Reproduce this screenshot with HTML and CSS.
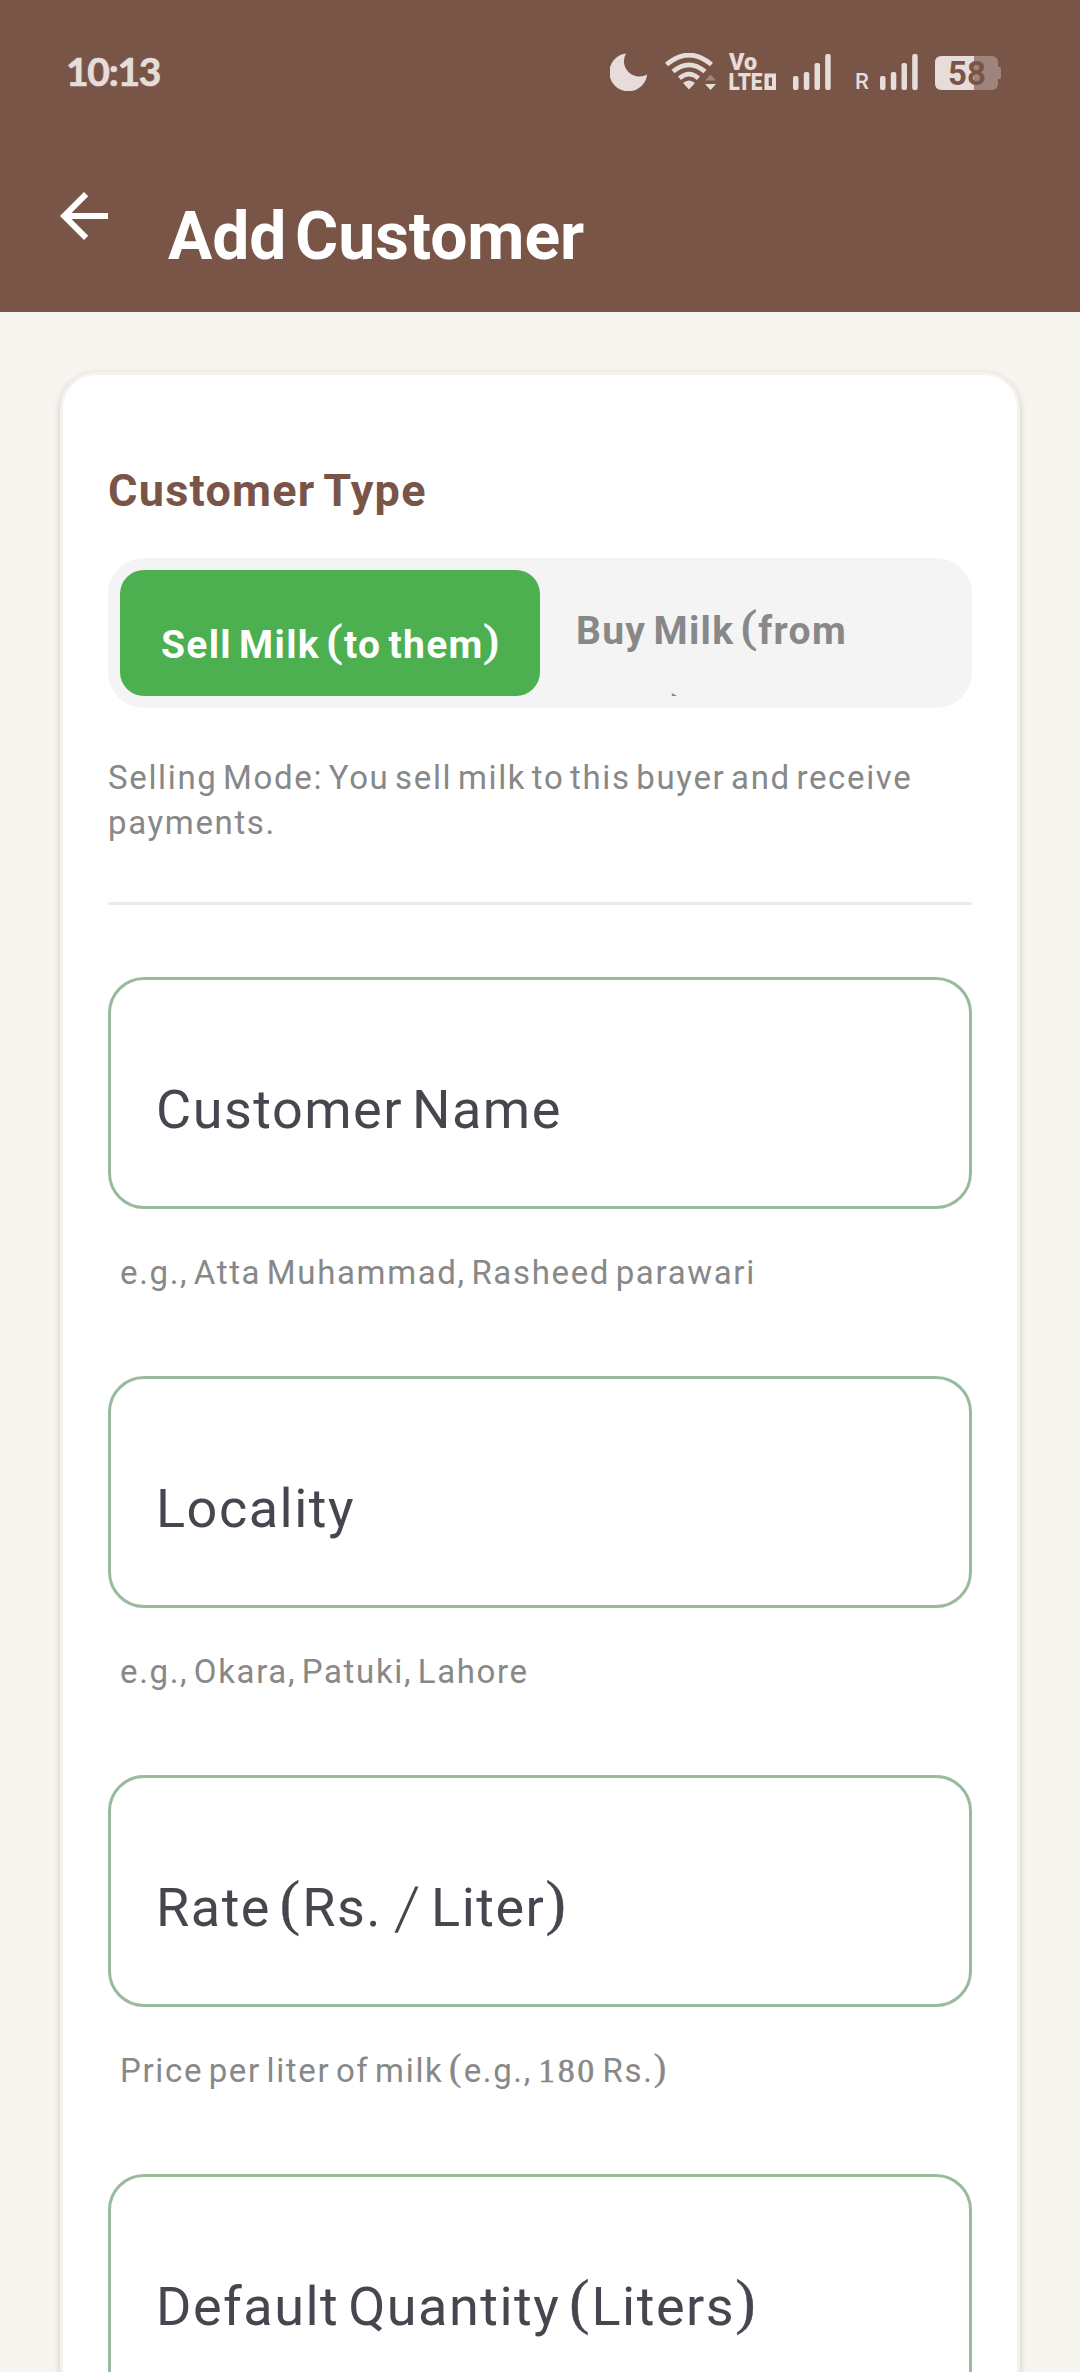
FILE: index.html
```html
<!DOCTYPE html>
<html lang="en">
<head>
<meta charset="utf-8">
<title>Add Customer</title>
<link rel="stylesheet" href="styles.css">
</head>
<body>
<header class="header">
  <div class="status">
    <span class="clock">10:13</span>
    <div class="status-icons">
      <svg class="moon" width="38" height="38" viewBox="0 0 38 38"><path d="M16 .4A19 19 0 1 0 37.200 21.500 15.500 15.500 0 0 1 16 .4Z"/></svg>
      <svg class="wifi" width="52" height="38" viewBox="0 0 52 38">
        <g class="line"><path d="M2.500 11.500Q25 -7.500 47.500 11.500"/><path d="M9 18.600Q25 5 41 18.600"/><path d="M15.500 25.300Q25 17 34.500 25.300"/></g>
        <path d="M19 30Q25 25 31 30L25 36.500Z"/>
        <path class="dim" d="M41 27.500L46.500 21.500 52 27.500Z"/><path d="M41 31H52L46.500 37Z"/>
      </svg>
      <svg class="volte" width="48" height="38" viewBox="0 0 48 38">
        <text x="-1" y="17" textLength="28" lengthAdjust="spacingAndGlyphs">Vo</text><text x="-1.500" y="37" textLength="34" lengthAdjust="spacingAndGlyphs">LTE</text>
        <path fill-rule="evenodd" d="M34.500 20.500H46V37H34.500ZM38.700 24.500V33H42V24.500Z"/>
      </svg>
      <svg class="signal" width="38" height="38" viewBox="0 0 38 38"><rect y="23" width="5.500" height="14" rx="2"/><rect x="10.800" y="19" width="5.500" height="18" rx="2"/><rect x="21.500" y="10" width="5.500" height="27" rx="2"/><rect x="32.200" y="1" width="5.500" height="36" rx="2"/></svg>
      <span class="roaming">R</span>
      <svg class="signal" width="38" height="38" viewBox="0 0 38 38"><rect y="23" width="5.500" height="14" rx="2"/><rect x="10.800" y="19" width="5.500" height="18" rx="2"/><rect x="21.500" y="10" width="5.500" height="27" rx="2"/><rect x="32.200" y="1" width="5.500" height="36" rx="2"/></svg>
      <svg class="battery" width="66" height="38" viewBox="0 0 66 38">
        <path class="dim" d="M39 3H56.500Q63 3 63 9.500V14H64.500Q66 14 66 15.500V24.500Q66 26 64.500 26H63V30.500Q63 37 56.500 37H39Z"/>
        <path d="M6.500 3H39V37H6.500Q0 37 0 30.500V9.500Q0 3 6.500 3Z"/>
        <text class="level" x="13" y="31.500" textLength="38">58</text>
      </svg>
    </div>
  </div>
  <div class="appbar">
    <svg class="back" width="72" height="72" viewBox="0 0 24 24"><path d="M20 11H7.830l5.590-5.590L12 4l-8 8 8 8 1.410-1.410L7.830 13H20v-2z"/></svg>
    <h1 class="title">Add Customer</h1>
  </div>
</header>
<main class="card">
  <h2 class="section">Customer Type</h2>
  <div class="toggle">
    <div class="tab tab-active">Sell Milk <span class="paren">(</span>to them<span class="paren">)</span></div>
    <div class="tab">Buy Milk <span class="paren">(</span>from<br>them<span class="paren">)</span></div>
  </div>
  <p class="mode">Selling Mode: You sell milk to this buyer and receive payments.</p>
  <div class="divider"></div>
  <div class="field">Customer Name</div>
  <p class="hint">e.g., Atta Muhammad, Rasheed parawari</p>
  <div class="field">Locality</div>
  <p class="hint">e.g., Okara, Patuki, Lahore</p>
  <div class="field">Rate <span class="paren">(</span>Rs. <span class="slash">/</span> Liter<span class="paren">)</span></div>
  <p class="hint">Price per liter of milk <span class="paren">(</span>e.g., <span class="num">180</span> Rs.<span class="paren">)</span></p>
  <div class="field">Default Quantity <span class="paren">(</span>Liters<span class="paren">)</span></div>
</main>
</body>
</html>
```
FILE: styles.css
```css
* { box-sizing: border-box; }
body {
  margin: 0;
  width: 1080px;
  height: 2372px;
  overflow: hidden;
  background: #f7f5f0;
  font-family: Roboto, sans-serif;
}
h1, h2, p { margin: 0; }

.header { height: 312px; background: #795548; color: #fff; }
.status {
  height: 144px;
  padding: 0 79px 0 66px;
  display: flex;
  justify-content: space-between;
  color: #e6dcd9;
}
.clock {
  margin-top: 48px;
  font: bold 39px/47px Lato, sans-serif;
  letter-spacing: -1.3px;
  -webkit-text-stroke: .7px currentColor;
}
.status-icons { display: flex; padding-top: 53px; fill: #e6dcd9; }
.wifi { margin-left: 16px; }
.wifi .line { fill: none; stroke: #e6dcd9; stroke-width: 4.6; }
.dim { opacity: .35; }
.volte { margin-left: 14px; overflow: visible; font: 900 23px Roboto, sans-serif; }
.signal { margin-left: 15px; }
.roaming { margin: 16px 0 0 24px; width: 10px; font: 500 22px/26px Roboto, sans-serif; }
.battery { margin-left: 17px; }
.level { fill: #795548; font: bold 33px Roboto, sans-serif; }

.appbar { display: flex; align-items: flex-start; padding-left: 48px; }
.back { margin: 36px 48px 0 0; fill: #fff; }
.title {
  margin-top: 33px;
  font-size: 66px;
  line-height: 120px;
  word-spacing: -7.6px;
  letter-spacing: -.1px;
}

.card {
  width: 960px;
  height: 2300px;
  margin: 60px auto 0;
  padding: 86px 45px 0;
  background: #fff;
  border: 3px solid #f8f0ec;
  border-radius: 36px;
  box-shadow: 0 2px 7px rgba(0, 0, 0, .18);
}
.section {
  color: #795548;
  font-size: 45px;
  line-height: 60px;
  letter-spacing: 1.25px;
  word-spacing: -3.5px;
}
.toggle {
  display: grid;
  grid-template-columns: 1fr 1fr;
  height: 150px;
  margin-top: 37px;
  padding: 12px;
  background: #f4f4f4;
  border-radius: 36px;
}
.tab {
  height: 126px;
  padding: 19px 0 0 36px;
  overflow: hidden;
  border-radius: 24px;
  color: #888;
  font-size: 39px;
  font-weight: bold;
  line-height: 84px;
  letter-spacing: 1.3px;
  word-spacing: -3.8px;
  white-space: nowrap;
}
.tab-active { padding: 33px 0 0 41px; background: #4caf50; color: #fff; }

.mode, .hint {
  color: #888;
  font-size: 33px;
  line-height: 45px;
  letter-spacing: 1.65px;
  word-spacing: -4.2px;
}
.mode { margin-top: 47px; }
.divider { height: 3px; margin: 57px 0 72px; background: #ebebeb; }
.field {
  height: 232px;
  padding: 90px 45px 0;
  border: 3px solid #99ba9c;
  border-radius: 36px;
  color: #49454f;
  font-size: 54px;
  line-height: 80px;
  letter-spacing: 1.5px;
  word-spacing: -6px;
  white-space: nowrap;
}
.hint { margin: 41px 0 81px; padding-left: 12px; white-space: nowrap; }

/* Brackets, slash and digits come from the lighter serif face */
.paren, .slash, .num { font-family: "Liberation Serif", serif; font-weight: normal; line-height: 0; }
.paren { margin-right: .5px; font-size: 1.13em; vertical-align: .045em; -webkit-text-stroke: .4px currentColor; }
.tab .paren { font-size: 1.16em; vertical-align: .065em; -webkit-text-stroke-width: 1.2px; }
.slash {
  display: inline-block;
  margin: 0 4.5px 0 6px;
  font-size: 1.28em;
  vertical-align: -.08em;
  transform: skewX(-6deg);
}
.num { margin-left: 1px; letter-spacing: 3px; -webkit-text-stroke: .6px currentColor; }
```
